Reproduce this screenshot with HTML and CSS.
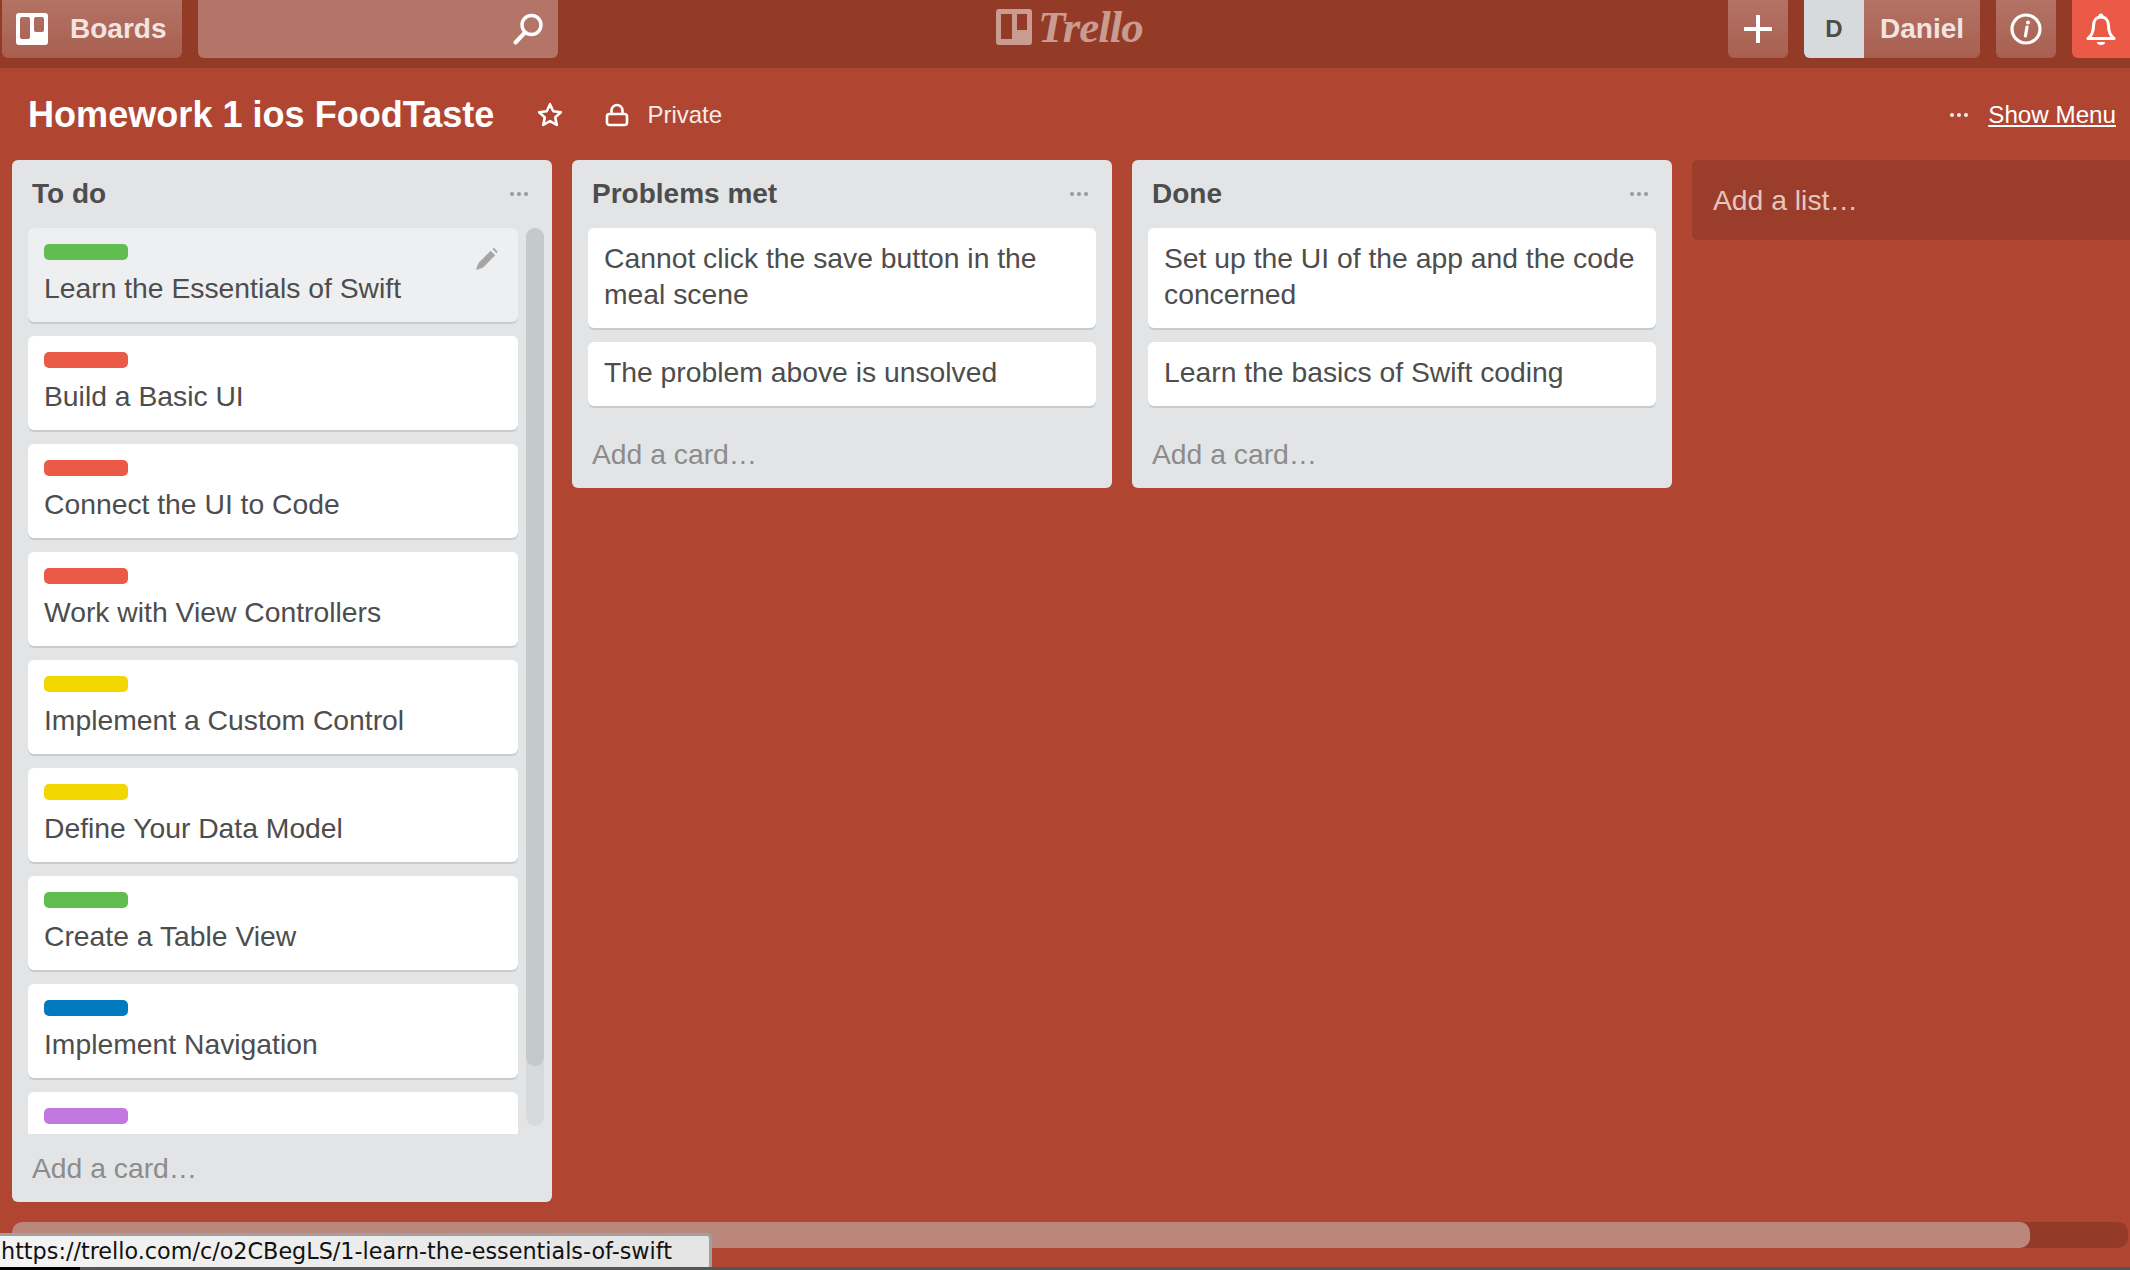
FILE: index.html
```html
<!DOCTYPE html>
<html lang="en">
<head>
    <meta charset="UTF-8">
    <meta name="viewport" content="width=device-width, initial-scale=1.0">
    <title>Homework 1 ios FoodTaste</title>
    <link rel="stylesheet" href="styles.css">
</head>
<body>
    <header class="topbar">
        <div class="topbar-left">
            <a class="btn boards-btn" href="#">
                <svg class="boards-icon" viewBox="0 0 32 32"><path fill="#fff" fill-rule="evenodd" d="M3 0h26a3 3 0 0 1 3 3v26a3 3 0 0 1-3 3H3a3 3 0 0 1-3-3V3a3 3 0 0 1 3-3zM6 4a2 2 0 0 0-2 2v18a2 2 0 0 0 2 2h6a2 2 0 0 0 2-2V6a2 2 0 0 0-2-2zM20 4a2 2 0 0 0-2 2v11a2 2 0 0 0 2 2h6a2 2 0 0 0 2-2V6a2 2 0 0 0-2-2z"/></svg>
                <span>Boards</span>
            </a>
            <div class="search">
                <svg class="search-icon" viewBox="0 0 32 32"><circle cx="19.5" cy="12" r="9.5" fill="none" stroke="#fff" stroke-width="3.4"/><path d="M13 19.5L3.5 29.5" fill="none" stroke="#fff" stroke-width="4" stroke-linecap="round"/></svg>
            </div>
        </div>
        <div class="logo">
            <svg class="logo-icon" viewBox="0 0 36 36"><path fill="#c99b91" fill-rule="evenodd" d="M3 0h30a3 3 0 0 1 3 3v30a3 3 0 0 1-3 3H3a3 3 0 0 1-3-3V3a3 3 0 0 1 3-3zM5 5v25h11V5zM21 5v16h10V5z"/></svg>
            <span class="logo-text">Trello</span>
        </div>
        <div class="topbar-right">
            <a class="btn icon-btn" href="#">
                <svg class="plus-icon" viewBox="0 0 28 28"><path d="M14 1v26M1 14h26" stroke="#fff" stroke-width="4" stroke-linecap="round"/></svg>
            </a>
            <a class="btn user-btn" href="#">
                <span class="avatar">D</span>
                <span class="user-name">Daniel</span>
            </a>
            <a class="btn icon-btn" href="#">
                <svg class="info-icon" viewBox="0 0 32 32"><circle cx="16" cy="16" r="14" fill="none" stroke="#fff" stroke-width="3.2"/><path d="M17 14l-1.6 9" stroke="#fff" stroke-width="3.2" stroke-linecap="round"/><circle cx="18" cy="9.5" r="2" fill="#fff"/></svg>
            </a>
            <a class="btn bell-btn" href="#">
                <svg class="bell-icon" viewBox="0 0 30 32"><path d="M15 4c-5 0-7.500 4-7.500 8.500 0 6-1.500 10-5.500 13h26c-4-3-5.500-7-5.500-13C22.500 8 20 4 15 4z" fill="none" stroke="#fff" stroke-width="3" stroke-linejoin="round"/><circle cx="15" cy="3" r="2.500" fill="#fff"/><path d="M11 29a4 3 0 0 0 8 0z" fill="#fff"/></svg>
            </a>
        </div>
    </header>

    <section class="board-header">
        <h1>Homework 1 ios FoodTaste</h1>
        <svg class="star-icon" viewBox="0 0 24 24"><path d="M12 2l3 6.600 7 .8-5.200 4.800 1.500 7-6.300-3.600-6.300 3.600 1.500-7L2 9.400l7-.8z" fill="none" stroke="#fff" stroke-width="2.400" stroke-linejoin="round"/></svg>
        <svg class="lock-icon" viewBox="0 0 24 24"><path d="M6.500 11V7.500a5.500 5.500 0 0 1 11 0V11" fill="none" stroke="#fff" stroke-width="2.600"/><rect x="2" y="11" width="20" height="11" rx="2.500" fill="none" stroke="#fff" stroke-width="2.600"/></svg>
        <span class="private">Private</span>
        <div class="show-menu">
            <span class="dots light"><i></i><i></i><i></i></span>
            <a href="#">Show Menu</a>
        </div>
    </section>

    <main class="lists">
        <div class="list list-tall">
            <div class="list-head">
                <h2>To do</h2>
                <span class="dots"><i></i><i></i><i></i></span>
            </div>
            <div class="list-scroll">
                <div class="cards">
                    <div class="card card-hover">
                        <span class="label green"></span>
                        <p>Learn the Essentials of Swift</p>
                        <svg class="pencil-icon" viewBox="0 0 24 24"><path d="M0 24l2.500-7.500L16 3l5 5L7.500 21.500zM18 1l1.500-1.200 4 4L22.500 6z" fill="#a6a6a6"/></svg>
                    </div>
                    <div class="card"><span class="label red"></span><p>Build a Basic UI</p></div>
                    <div class="card"><span class="label red"></span><p>Connect the UI to Code</p></div>
                    <div class="card"><span class="label red"></span><p>Work with View Controllers</p></div>
                    <div class="card"><span class="label yellow"></span><p>Implement a Custom Control</p></div>
                    <div class="card"><span class="label yellow"></span><p>Define Your Data Model</p></div>
                    <div class="card"><span class="label green"></span><p>Create a Table View</p></div>
                    <div class="card"><span class="label blue"></span><p>Implement Navigation</p></div>
                    <div class="card"><span class="label purple"></span></div>
                </div>
                <div class="scrollbar"><div class="scrollbar-thumb"></div></div>
            </div>
            <a class="add-card" href="#">Add a card…</a>
        </div>

        <div class="list">
            <div class="list-head">
                <h2>Problems met</h2>
                <span class="dots"><i></i><i></i><i></i></span>
            </div>
            <div class="cards">
                <div class="card"><p>Cannot click the save button in the meal scene</p></div>
                <div class="card"><p>The problem above is unsolved</p></div>
            </div>
            <a class="add-card" href="#">Add a card…</a>
        </div>

        <div class="list">
            <div class="list-head">
                <h2>Done</h2>
                <span class="dots"><i></i><i></i><i></i></span>
            </div>
            <div class="cards">
                <div class="card"><p>Set up the UI of the app and the code concerned</p></div>
                <div class="card"><p>Learn the basics of Swift coding</p></div>
            </div>
            <a class="add-card" href="#">Add a card…</a>
        </div>

        <a class="add-list" href="#">Add a list…</a>
    </main>

    <div class="hscroll"><div class="hscroll-thumb"></div></div>
    <div class="window-edge"></div>
    <div class="status-link">https://trello.com/c/o2CBegLS/1-learn-the-essentials-of-swift</div>
</body>
</html>
```

FILE: styles.css
```css
* {
    box-sizing: border-box;
}
html, body {
    height: 100%;
}
body {
    margin: 0;
    height: 1270px;
    overflow: hidden;
    position: relative;
    background: #b04632;
    color: #4d4d4d;
    font-family: "Liberation Sans", Arial, sans-serif;
    font-size: 28px;
    display: flex;
    flex-direction: column;
}
a {
    color: inherit;
    text-decoration: none;
}

/* top bar */
.topbar {
    height: 68px;
    flex: none;
    background: #933b27;
    display: flex;
    justify-content: space-between;
    position: relative;
    padding-left: 2px;
}
.topbar-left, .topbar-right {
    display: flex;
    height: 58px;
}
.topbar-left {
    gap: 16px;
}
.topbar-right {
    gap: 16px;
}
.btn {
    display: flex;
    align-items: center;
    justify-content: center;
    height: 58px;
    border-radius: 0 0 6px 6px;
    background: linear-gradient(#b37365, #a85f50);
    color: #fff;
    font-weight: bold;
}
.boards-btn {
    width: 180px;
    justify-content: flex-start;
    padding-left: 14px;
    gap: 22px;
    font-size: 28px;
    color: #f3e4e1;
}
.boards-icon {
    width: 32px;
    height: 32px;
}
.search {
    width: 360px;
    height: 58px;
    background: #b37568;
    border-radius: 0 0 6px 6px;
    display: flex;
    align-items: center;
    justify-content: flex-end;
    padding-right: 14px;
}
.search-icon {
    width: 32px;
    height: 32px;
}
.logo {
    position: absolute;
    left: 996px;
    top: 9px;
    display: flex;
    align-items: center;
    gap: 6px;
}
.logo-icon {
    width: 36px;
    height: 36px;
}
.logo-text {
    font-family: "Liberation Serif", serif;
    font-style: italic;
    font-weight: bold;
    font-size: 45px;
    line-height: 36px;
    letter-spacing: -1px;
    color: #c99b91;
}
.icon-btn {
    width: 60px;
}
.plus-icon {
    width: 28px;
    height: 28px;
}
.info-icon {
    width: 32px;
    height: 32px;
}
.user-btn {
    width: 176px;
    justify-content: flex-start;
    overflow: hidden;
}
.avatar {
    width: 60px;
    height: 58px;
    flex: none;
    background: #d6dadc;
    color: #4d4d4d;
    font-size: 24px;
    display: flex;
    align-items: center;
    justify-content: center;
}
.user-name {
    margin-left: 16px;
    color: #f3e4e1;
}
.bell-btn {
    width: 58px;
    background: #eb5a46;
    border-radius: 0 0 0 6px;
}
.bell-icon {
    width: 30px;
    height: 32px;
}

/* board header */
.board-header {
    height: 92px;
    flex: none;
    display: flex;
    align-items: center;
    padding: 1px 14px 0 28px;
    color: #fff;
}
.board-header h1 {
    margin: 0 43px 0 0;
    font-size: 36.1px;
    font-weight: bold;
}
.star-icon {
    width: 26px;
    height: 26px;
    margin-right: 42px;
}
.lock-icon {
    width: 24px;
    height: 24px;
    margin-right: 18px;
}
.private {
    font-size: 24px;
    color: #f7ebe8;
}
.show-menu {
    margin-left: auto;
    display: flex;
    align-items: center;
    gap: 20px;
    font-size: 24.2px;
}
.show-menu a {
    text-decoration: underline;
}
.dots {
    display: flex;
    gap: 3px;
    color: #999;
}
.dots i {
    width: 4px;
    height: 4px;
    border-radius: 50%;
    background: #999;
}
.dots.light i {
    background: #f7ebe8;
    width: 4px;
    height: 4px;
}

/* lists */
.lists {
    flex: none;
    height: 1062px;
    display: flex;
    align-items: flex-start;
    gap: 20px;
    padding-left: 12px;
}
.list {
    width: 540px;
    flex: none;
    background: #e2e4e6;
    border-radius: 6px;
    display: flex;
    flex-direction: column;
}
.list-tall {
    height: 1042px;
}
.list-head {
    height: 68px;
    flex: none;
    display: flex;
    align-items: center;
    justify-content: space-between;
    padding: 0 24px 0 20px;
}
.list-head h2 {
    margin: 0;
    font-size: 28px;
    font-weight: bold;
    color: #4d4d4d;
}
.list-scroll {
    flex: 1;
    min-height: 0;
    display: flex;
    gap: 8px;
    padding: 0 8px 0 16px;
}
.cards {
    flex: 1;
    min-width: 0;
    padding: 0 16px;
    display: flex;
    flex-direction: column;
    gap: 14px;
}
.list-scroll .cards {
    padding: 0;
    overflow: hidden;
}
.card {
    position: relative;
    flex: none;
    background: #fff;
    border-radius: 6px;
    box-shadow: 0 2px 0 #c8cbce;
    padding: 12px 16px 16px;
    font-size: 28.3px;
    line-height: 36px;
    color: #4d4d4d;
}
.card p {
    margin: 0;
}
.card-hover {
    background: #edeff0;
}
.label {
    display: block;
    width: 84px;
    height: 16px;
    margin: 4px 0 10px;
    border-radius: 5px;
}
.green { background: #61bd4f; }
.red { background: #eb5a46; }
.yellow { background: #f2d600; }
.blue { background: #0079bf; }
.purple { background: #c377e0; height: 16px; margin-bottom: 46px; }
.pencil-icon {
    position: absolute;
    top: 20px;
    right: 20px;
    width: 22px;
    height: 22px;
}
.scrollbar {
    width: 18px;
    flex: none;
    height: 898px;
    border-radius: 9px;
    background: #d6dadc;
}
.scrollbar-thumb {
    height: 838px;
    border-radius: 9px;
    background: #c4c9cc;
}
.add-card {
    height: 68px;
    flex: none;
    display: flex;
    align-items: center;
    padding-left: 20px;
    font-size: 28.3px;
    color: #8c8c8c;
}
.list:not(.list-tall) .cards {
    padding-bottom: 14px;
}
.add-list {
    width: 540px;
    height: 80px;
    flex: none;
    display: flex;
    align-items: center;
    padding-left: 21px;
    border-radius: 6px;
    background: #9b3d2b;
    color: #e5c6bf;
    font-size: 28.3px;
}

/* bottom scrollbar */
.hscroll {
    height: 26px;
    flex: none;
    margin: 0 2px 0 12px;
    border-radius: 10px;
    background: #933b27;
}
.hscroll-thumb {
    width: 2018px;
    height: 26px;
    border-radius: 10px;
    background: #bb867c;
}
.window-edge {
    height: 3px;
    margin-top: 19px;
    flex: none;
    background: linear-gradient(90deg, #000 80px, #555 80px);
}
.status-link {
    position: absolute;
    left: 0;
    bottom: 3px;
    width: 712px;
    height: 34px;
    padding-left: 1px;
    border: 3px solid #a0a0a0;
    border-left: none;
    border-bottom: none;
    border-radius: 0 5px 0 0;
    background: linear-gradient(90deg, #f4f4f4, #e4e4e4);
    color: #111;
    font-family: "DejaVu Sans", sans-serif;
    font-size: 22.3px;
    line-height: 30px;
    white-space: nowrap;
}
```
